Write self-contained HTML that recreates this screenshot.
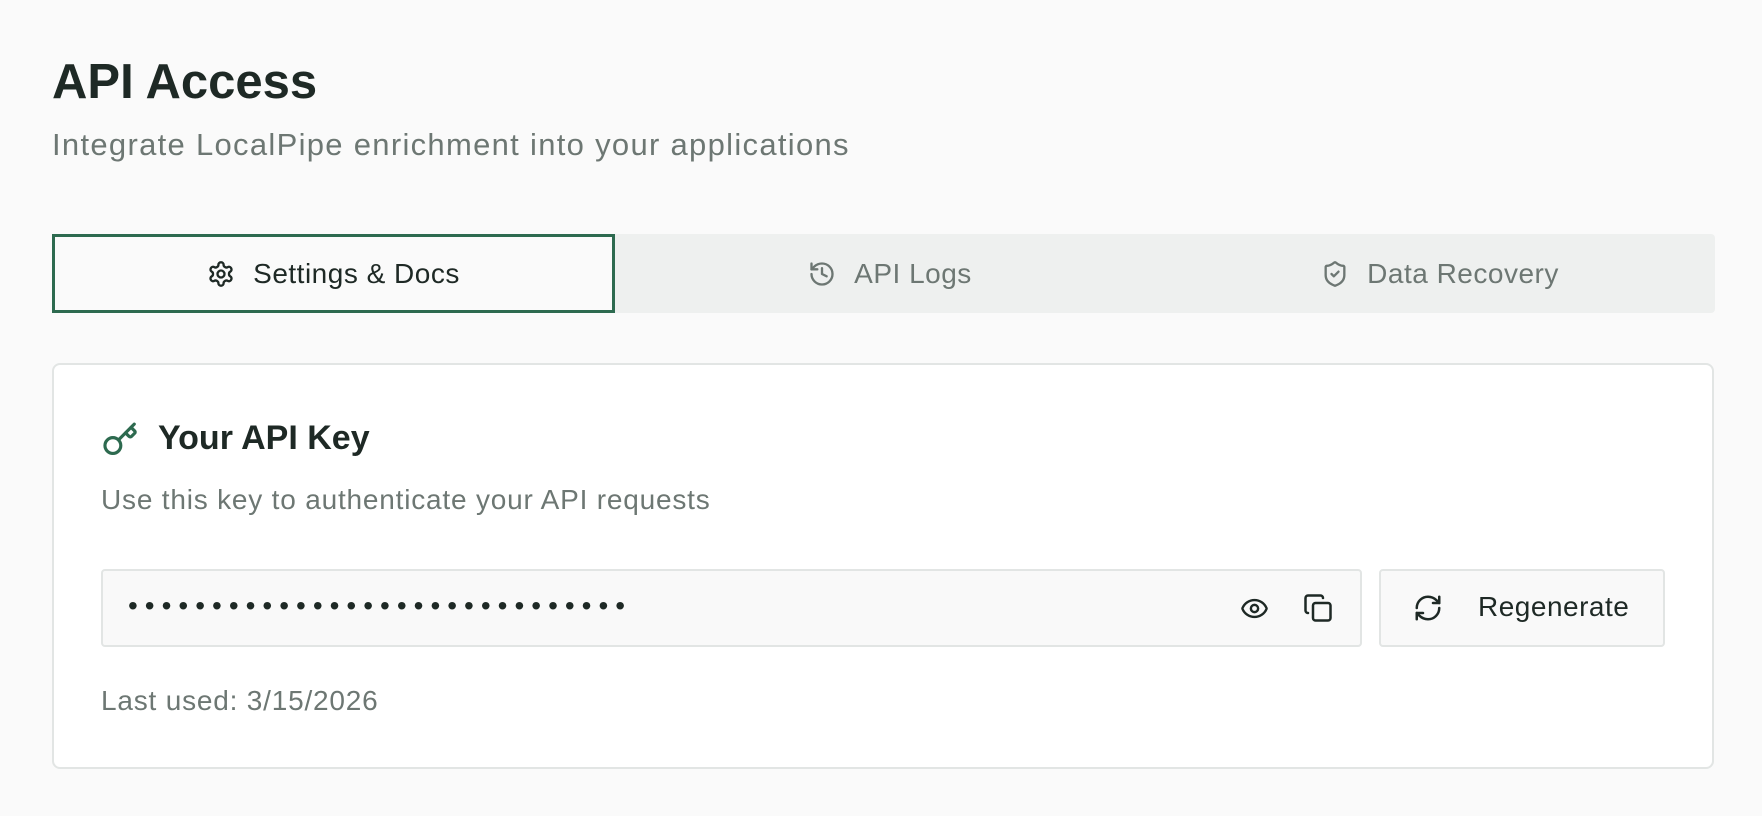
<!DOCTYPE html>
<html><head><meta charset="utf-8"><style>
*{box-sizing:border-box;margin:0;padding:0}
body{width:1762px;height:816px;background:#fafafa;font-family:"Liberation Sans",sans-serif;color:#1e2925;position:relative;overflow:hidden}
.abs{position:absolute}
h1{position:absolute;left:52px;top:54px;font-size:49px;font-weight:bold;color:#1e2925}
.sub{left:52px;top:127px;font-size:31px;letter-spacing:1.3px;color:#6d7773}
.tabs{left:52px;top:234px;width:1663px;height:79px;background:#eef0ef;border-radius:4px}
.tab{position:absolute;top:0;height:79px;display:flex;align-items:center;justify-content:center;font-size:28px;letter-spacing:0.5px;color:#6d7773;gap:18px}
.tab.act{left:0;width:563px;background:#fafafa;border:3px solid #2d6a4f;color:#1e2925}
.card{left:52px;top:363px;width:1662px;height:406px;background:#fff;border:2px solid #e2e5e4;border-radius:8px}
.inp{left:101px;top:569px;width:1261px;height:78px;background:#f9f9f9;border:2px solid #e2e5e4;border-radius:4px}
.btn{left:1379px;top:569px;width:286px;height:78px;background:#f9f9f9;border:2px solid #e2e5e4;border-radius:4px}
svg{fill:none;stroke-linecap:round;stroke-linejoin:round}
</style></head><body>
<h1>API Access</h1>
<div class="abs sub">Integrate LocalPipe enrichment into your applications</div>
<div class="abs tabs">
 <div class="tab act"><svg width="28" height="28" viewBox="0 0 24 24" stroke="#1e2925" stroke-width="2"><path d="M12.22 2h-.44a2 2 0 0 0-2 2v.18a2 2 0 0 1-1 1.73l-.43.25a2 2 0 0 1-2 0l-.15-.08a2 2 0 0 0-2.73.73l-.22.38a2 2 0 0 0 .73 2.73l.15.1a2 2 0 0 1 1 1.72v.51a2 2 0 0 1-1 1.74l-.15.09a2 2 0 0 0-.73 2.73l.22.38a2 2 0 0 0 2.73.73l.15-.08a2 2 0 0 1 2 0l.43.25a2 2 0 0 1 1 1.73V20a2 2 0 0 0 2 2h.44a2 2 0 0 0 2-2v-.18a2 2 0 0 1 1-1.73l.43-.25a2 2 0 0 1 2 0l.15.08a2 2 0 0 0 2.73-.73l.22-.39a2 2 0 0 0-.73-2.73l-.15-.08a2 2 0 0 1-1-1.74v-.5a2 2 0 0 1 1-1.74l.15-.09a2 2 0 0 0 .73-2.73l-.22-.38a2 2 0 0 0-2.73-.73l-.15.08a2 2 0 0 1-2 0l-.43-.25a2 2 0 0 1-1-1.73V4a2 2 0 0 0-2-2z"/><circle cx="12" cy="12" r="3"/></svg>Settings &amp; Docs</div>
 <div class="tab" style="left:563px;width:550px"><svg width="28" height="28" viewBox="0 0 24 24" stroke="#6d7773" stroke-width="2"><path d="M3 12a9 9 0 1 0 9-9 9.75 9.75 0 0 0-6.74 2.74L3 8"/><path d="M3 3v5h5"/><path d="M12 7v5l4 2"/></svg>API Logs</div>
 <div class="tab" style="left:1113px;width:550px"><svg width="28" height="28" viewBox="0 0 24 24" stroke="#6d7773" stroke-width="2"><path d="M20 13c0 5-3.5 7.5-7.66 8.95a1 1 0 0 1-.67-.01C7.5 20.5 4 18 4 13V6a1 1 0 0 1 1-1c2 0 4.5-1.2 6.24-2.72a1.17 1.17 0 0 1 1.52 0C14.51 3.81 17 5 19 5a1 1 0 0 1 1 1z"/><path d="m9 12 2 2 4-4"/></svg>Data Recovery</div>
</div>
<div class="abs card"></div>
<svg class="abs" style="left:101px;top:421px" width="38" height="38" viewBox="0 0 24 24" stroke="#2d6a4f" stroke-width="2"><path d="m15.5 7.5 2.3 2.3a1 1 0 0 0 1.4 0l2.1-2.1a1 1 0 0 0 0-1.4L19 4"/><path d="m21 2-9.6 9.6"/><circle cx="7.5" cy="15.5" r="5"/></svg>
<div class="abs" style="left:158px;top:419px;font-size:34px;font-weight:bold">Your API Key</div>
<div class="abs" style="left:101px;top:484px;font-size:28px;letter-spacing:0.8px;color:#6d7773">Use this key to authenticate your API requests</div>
<div class="abs inp"></div>
<div class="abs" style="left:128px;top:590px;font-size:28px;letter-spacing:7px;color:#1e2925">••••••••••••••••••••••••••••••</div>
<svg class="abs" style="left:1240px;top:594px" width="29" height="29" viewBox="0 0 24 24" stroke="#1e2925" stroke-width="2"><path d="M2.06 12.35a1 1 0 0 1 0-.7 10.75 10.75 0 0 1 19.88 0 1 1 0 0 1 0 .7 10.75 10.75 0 0 1-19.88 0"/><circle cx="12" cy="12" r="3"/></svg>
<svg class="abs" style="left:1303px;top:593px" width="30" height="30" viewBox="0 0 24 24" stroke="#1e2925" stroke-width="2"><rect x="8" y="8" width="14" height="14" rx="2"/><path d="M4 16c-1.1 0-2-.9-2-2V4c0-1.1.9-2 2-2h10c1.1 0 2 .9 2 2"/></svg>
<div class="abs btn"></div>
<svg class="abs" style="left:1413px;top:593px" width="30" height="30" viewBox="0 0 24 24" stroke="#1e2925" stroke-width="2"><path d="M3 12a9 9 0 0 1 9-9 9.75 9.75 0 0 1 6.74 2.74L21 8"/><path d="M21 3v5h-5"/><path d="M21 12a9 9 0 0 1-9 9 9.75 9.75 0 0 1-6.74-2.74L3 16"/><path d="M8 16H3v5"/></svg>
<div class="abs" style="left:1478px;top:591px;font-size:28px;letter-spacing:0.5px">Regenerate</div>
<div class="abs" style="left:101px;top:685px;font-size:28px;letter-spacing:0.8px;color:#6d7773">Last used: 3/15/2026</div>
</body></html>
